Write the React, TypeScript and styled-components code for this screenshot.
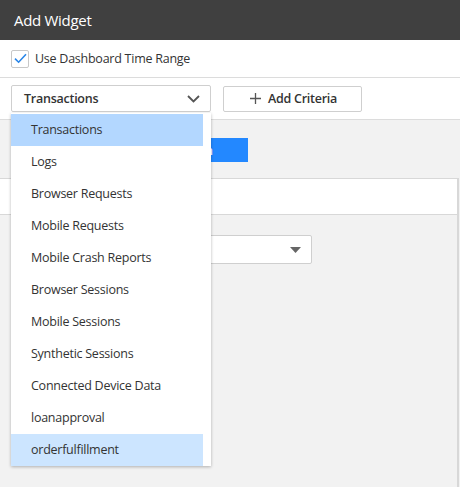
import React from "react";
import styled, { createGlobalStyle } from "styled-components";

const GlobalStyle = createGlobalStyle`
  html, body {
    margin: 0;
    padding: 0;
    background: #f2f2f2;
  }
  body {
    font-family: 'Open Sans', 'Noto Sans', sans-serif;
    color: #333333;
  }
`;

const Dialog = styled.div`
  position: relative;
  width: 460px;
  height: 487px;
  overflow: hidden;
  background: #f2f2f2;
  display: flex;
  flex-direction: column;
`;

const TitleBar = styled.div`
  height: 40px;
  background: #404040;
  color: #ffffff;
  font-size: 15px;
  letter-spacing: -0.3px;
  display: flex;
  align-items: center;
  padding-left: 14px;
  flex-shrink: 0;
`;

const CheckRow = styled.label`
  height: 37px;
  background: #ffffff;
  border-bottom: 1px solid #dcdcdc;
  display: flex;
  align-items: center;
  gap: 6px;
  padding-left: 11px;
  font-size: 12.5px;
  letter-spacing: -0.25px;
  flex-shrink: 0;
`;

const CheckBox = styled.span`
  width: 16px;
  height: 16px;
  border: 1px solid #c8c8c8;
  border-radius: 2px;
  background: #fff;
  display: flex;
  align-items: center;
  justify-content: center;
`;

const Toolbar = styled.div`
  height: 41px;
  background: #ffffff;
  border-bottom: 1px solid #dcdcdc;
  display: flex;
  align-items: center;
  gap: 12px;
  padding-left: 11px;
  flex-shrink: 0;
`;

const SelectBox = styled.div<{ $width: number; $height?: number }>`
  width: ${p => p.$width}px;
  height: ${p => p.$height ?? 27}px;
  box-sizing: border-box;
  border: 1px solid #cfcfcf;
  border-radius: 2px;
  background: #fff;
  display: flex;
  align-items: center;
  justify-content: space-between;
  padding: 0 10px 0 12px;
  font-size: 12.5px;
  letter-spacing: -0.25px;
  font-weight: 600;
`;

const OutlineButton = styled.button`
  width: 139px;
  height: 26px;
  box-sizing: border-box;
  border: 1px solid #cfcfcf;
  border-radius: 2px;
  background: #fff;
  display: flex;
  align-items: center;
  justify-content: center;
  gap: 7px;
  font-family: inherit;
  font-size: 12.5px;
  letter-spacing: -0.25px;
  font-weight: 600;
  color: #333;
  padding: 0 0 0 2px;
`;

const Body = styled.div`
  flex: 1;
  display: flex;
  flex-direction: column;
  padding-top: 18px;
`;

const PrimaryButton = styled.button`
  align-self: flex-start;
  margin-left: 120px;
  width: 128px;
  height: 24px;
  border: none;
  background: #2388ff;
  color: #fff;
  font-family: inherit;
  font-size: 13px;
  font-weight: 600;
  text-align: right;
  padding: 0 35px 0 0;
`;

const Panel = styled.div`
  margin-top: 16px;
  width: 459px;
  flex: 1;
  box-sizing: border-box;
  border-top: 1px solid #d8d8d8;
  border-right: 2px solid #d8d8d8;
  display: flex;
  flex-direction: column;
`;

const PanelHead = styled.div`
  height: 35px;
  background: #fff;
  border-bottom: 1px solid #d8d8d8;
`;

const PanelBody = styled.div`
  padding: 20px 0 0 11px;
`;

const Menu = styled.ul`
  position: absolute;
  top: 113px;
  left: 11px;
  width: 200px;
  box-sizing: border-box;
  margin: 0;
  padding: 1px 8px 0 0;
  list-style: none;
  background: #fff;
  box-shadow: 0 1px 3px rgba(0, 0, 0, 0.28);
`;

const MenuItem = styled.li<{ $tone?: "active" | "hover" }>`
  height: 32px;
  display: flex;
  align-items: center;
  padding-left: 20px;
  padding-bottom: 1px;
  box-sizing: border-box;
  font-size: 12.5px;
  letter-spacing: -0.25px;
  color: #333;
  background: ${p =>
    p.$tone === "active" ? "#b3d7ff" : p.$tone === "hover" ? "#cce5ff" : "transparent"};
`;

const items = [
  "Transactions",
  "Logs",
  "Browser Requests",
  "Mobile Requests",
  "Mobile Crash Reports",
  "Browser Sessions",
  "Mobile Sessions",
  "Synthetic Sessions",
  "Connected Device Data",
  "loanapproval",
  "orderfulfillment",
];

export default function App() {
  return (
    <>
      <GlobalStyle />
      <Dialog>
        <TitleBar>Add Widget</TitleBar>
        <CheckRow>
          <CheckBox>
            <svg width="13" height="11" viewBox="0 0 13 11">
              <path d="M1 5.6 L4.6 9.2 L12 1.2" fill="none" stroke="#2a86e8" strokeWidth="1.6" />
            </svg>
          </CheckBox>
          Use Dashboard Time Range
        </CheckRow>
        <Toolbar>
          <SelectBox $width={200}>
            Transactions
            <svg width="13" height="8" viewBox="0 0 13 8">
              <path d="M1 1 L6.5 6.5 L12 1" fill="none" stroke="#555" strokeWidth="1.8" />
            </svg>
          </SelectBox>
          <OutlineButton>
            <svg width="11" height="11" viewBox="0 0 11 11">
              <path d="M5.5 0 V11 M0 5.5 H11" stroke="#555" strokeWidth="1.3" />
            </svg>
            Add Criteria
          </OutlineButton>
        </Toolbar>
        <Body>
          <PrimaryButton>Run</PrimaryButton>
          <Panel>
            <PanelHead />
            <PanelBody>
              <SelectBox $width={301} $height={29}>
                <span />
                <svg width="11" height="6" viewBox="0 0 11 6">
                  <path d="M0 0 H11 L5.5 6 Z" fill="#666" />
                </svg>
              </SelectBox>
            </PanelBody>
          </Panel>
        </Body>
        <Menu>
          {items.map((it, i) => (
            <MenuItem
              key={it}
              $tone={i === 0 ? "active" : i === items.length - 1 ? "hover" : undefined}
            >
              {it}
            </MenuItem>
          ))}
        </Menu>
      </Dialog>
    </>
  );
}
